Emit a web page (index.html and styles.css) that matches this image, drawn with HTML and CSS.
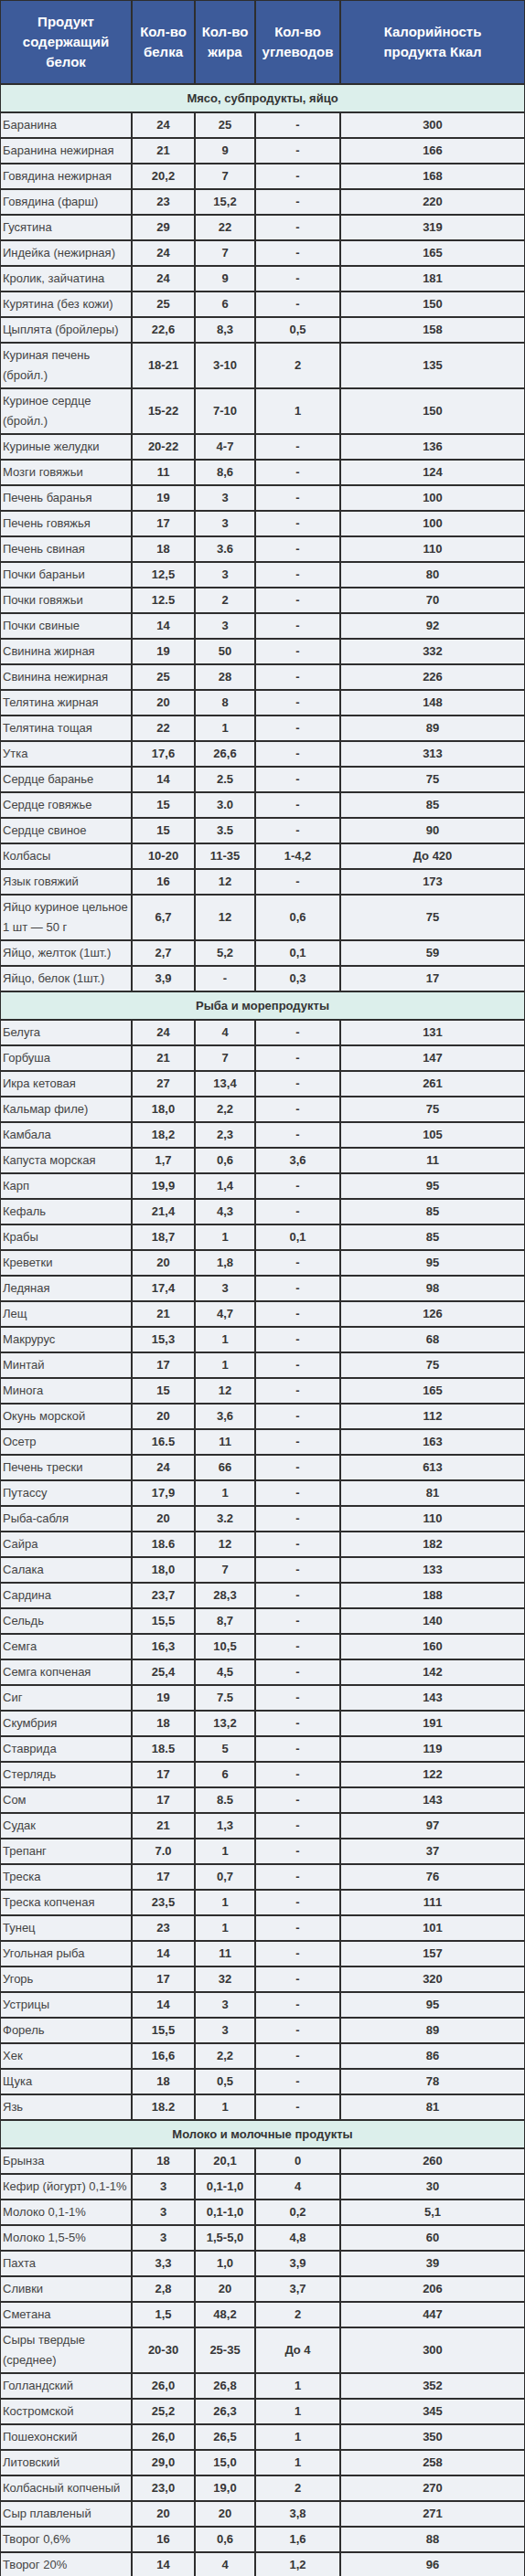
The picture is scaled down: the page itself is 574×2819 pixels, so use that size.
FILE: index.html
```html
<!DOCTYPE html>
<html lang="ru">
<head>
<meta charset="utf-8">
<title>Белок в продуктах</title>
<link rel="stylesheet" href="styles.css">
</head>
<body>
<table class="tbl">
<thead>
<tr class="hdr">
<th class="c1">Продукт<br>содержащий<br>белок</th>
<th class="c2">Кол-во<br>белка</th>
<th class="c3">Кол-во<br>жира</th>
<th class="c4">Кол-во<br>углеводов</th>
<th class="c5">Калорийность<br>продукта Ккал</th>
</tr>
</thead>
<tbody>
<tr class="sec"><td colspan="5">Мясо, субпродукты, яйцо</td></tr>
<tr><td class="name">Баранина</td><td>24</td><td>25</td><td>-</td><td>300</td></tr>
<tr><td class="name">Баранина нежирная</td><td>21</td><td>9</td><td>-</td><td>166</td></tr>
<tr><td class="name">Говядина нежирная</td><td>20,2</td><td>7</td><td>-</td><td>168</td></tr>
<tr><td class="name">Говядина (фарш)</td><td>23</td><td>15,2</td><td>-</td><td>220</td></tr>
<tr><td class="name">Гусятина</td><td>29</td><td>22</td><td>-</td><td>319</td></tr>
<tr><td class="name">Индейка (нежирная)</td><td>24</td><td>7</td><td>-</td><td>165</td></tr>
<tr><td class="name">Кролик, зайчатина</td><td>24</td><td>9</td><td>-</td><td>181</td></tr>
<tr><td class="name">Курятина (без кожи)</td><td>25</td><td>6</td><td>-</td><td>150</td></tr>
<tr><td class="name">Цыплята (бройлеры)</td><td>22,6</td><td>8,3</td><td>0,5</td><td>158</td></tr>
<tr><td class="name">Куриная печень<br>(бройл.)</td><td>18-21</td><td>3-10</td><td>2</td><td>135</td></tr>
<tr><td class="name">Куриное сердце<br>(бройл.)</td><td>15-22</td><td>7-10</td><td>1</td><td>150</td></tr>
<tr><td class="name">Куриные желудки</td><td>20-22</td><td>4-7</td><td>-</td><td>136</td></tr>
<tr><td class="name">Мозги говяжьи</td><td>11</td><td>8,6</td><td>-</td><td>124</td></tr>
<tr><td class="name">Печень баранья</td><td>19</td><td>3</td><td>-</td><td>100</td></tr>
<tr><td class="name">Печень говяжья</td><td>17</td><td>3</td><td>-</td><td>100</td></tr>
<tr><td class="name">Печень свиная</td><td>18</td><td>3.6</td><td>-</td><td>110</td></tr>
<tr><td class="name">Почки бараньи</td><td>12,5</td><td>3</td><td>-</td><td>80</td></tr>
<tr><td class="name">Почки говяжьи</td><td>12.5</td><td>2</td><td>-</td><td>70</td></tr>
<tr><td class="name">Почки свиные</td><td>14</td><td>3</td><td>-</td><td>92</td></tr>
<tr><td class="name">Свинина жирная</td><td>19</td><td>50</td><td>-</td><td>332</td></tr>
<tr><td class="name">Свинина нежирная</td><td>25</td><td>28</td><td>-</td><td>226</td></tr>
<tr><td class="name">Телятина жирная</td><td>20</td><td>8</td><td>-</td><td>148</td></tr>
<tr><td class="name">Телятина тощая</td><td>22</td><td>1</td><td>-</td><td>89</td></tr>
<tr><td class="name">Утка</td><td>17,6</td><td>26,6</td><td>-</td><td>313</td></tr>
<tr><td class="name">Сердце баранье</td><td>14</td><td>2.5</td><td>-</td><td>75</td></tr>
<tr><td class="name">Сердце говяжье</td><td>15</td><td>3.0</td><td>-</td><td>85</td></tr>
<tr><td class="name">Сердце свиное</td><td>15</td><td>3.5</td><td>-</td><td>90</td></tr>
<tr><td class="name">Колбасы</td><td>10-20</td><td>11-35</td><td>1-4,2</td><td>До 420</td></tr>
<tr><td class="name">Язык говяжий</td><td>16</td><td>12</td><td>-</td><td>173</td></tr>
<tr><td class="name">Яйцо куриное цельное<br>1 шт — 50 г</td><td>6,7</td><td>12</td><td>0,6</td><td>75</td></tr>
<tr><td class="name">Яйцо, желток (1шт.)</td><td>2,7</td><td>5,2</td><td>0,1</td><td>59</td></tr>
<tr><td class="name">Яйцо, белок (1шт.)</td><td>3,9</td><td>-</td><td>0,3</td><td>17</td></tr>
<tr class="sec"><td colspan="5">Рыба и морепродукты</td></tr>
<tr><td class="name">Белуга</td><td>24</td><td>4</td><td>-</td><td>131</td></tr>
<tr><td class="name">Горбуша</td><td>21</td><td>7</td><td>-</td><td>147</td></tr>
<tr><td class="name">Икра кетовая</td><td>27</td><td>13,4</td><td>-</td><td>261</td></tr>
<tr><td class="name">Кальмар филе)</td><td>18,0</td><td>2,2</td><td>-</td><td>75</td></tr>
<tr><td class="name">Камбала</td><td>18,2</td><td>2,3</td><td>-</td><td>105</td></tr>
<tr><td class="name">Капуста морская</td><td>1,7</td><td>0,6</td><td>3,6</td><td>11</td></tr>
<tr><td class="name">Карп</td><td>19,9</td><td>1,4</td><td>-</td><td>95</td></tr>
<tr><td class="name">Кефаль</td><td>21,4</td><td>4,3</td><td>-</td><td>85</td></tr>
<tr><td class="name">Крабы</td><td>18,7</td><td>1</td><td>0,1</td><td>85</td></tr>
<tr><td class="name">Креветки</td><td>20</td><td>1,8</td><td>-</td><td>95</td></tr>
<tr><td class="name">Ледяная</td><td>17,4</td><td>3</td><td>-</td><td>98</td></tr>
<tr><td class="name">Лещ</td><td>21</td><td>4,7</td><td>-</td><td>126</td></tr>
<tr><td class="name">Макрурус</td><td>15,3</td><td>1</td><td>-</td><td>68</td></tr>
<tr><td class="name">Минтай</td><td>17</td><td>1</td><td>-</td><td>75</td></tr>
<tr><td class="name">Минога</td><td>15</td><td>12</td><td>-</td><td>165</td></tr>
<tr><td class="name">Окунь морской</td><td>20</td><td>3,6</td><td>-</td><td>112</td></tr>
<tr><td class="name">Осетр</td><td>16.5</td><td>11</td><td>-</td><td>163</td></tr>
<tr><td class="name">Печень трески</td><td>24</td><td>66</td><td>-</td><td>613</td></tr>
<tr><td class="name">Путассу</td><td>17,9</td><td>1</td><td>-</td><td>81</td></tr>
<tr><td class="name">Рыба-сабля</td><td>20</td><td>3.2</td><td>-</td><td>110</td></tr>
<tr><td class="name">Сайра</td><td>18.6</td><td>12</td><td>-</td><td>182</td></tr>
<tr><td class="name">Салака</td><td>18,0</td><td>7</td><td>-</td><td>133</td></tr>
<tr><td class="name">Сардина</td><td>23,7</td><td>28,3</td><td>-</td><td>188</td></tr>
<tr><td class="name">Сельдь</td><td>15,5</td><td>8,7</td><td>-</td><td>140</td></tr>
<tr><td class="name">Семга</td><td>16,3</td><td>10,5</td><td>-</td><td>160</td></tr>
<tr><td class="name">Семга копченая</td><td>25,4</td><td>4,5</td><td>-</td><td>142</td></tr>
<tr><td class="name">Сиг</td><td>19</td><td>7.5</td><td>-</td><td>143</td></tr>
<tr><td class="name">Скумбрия</td><td>18</td><td>13,2</td><td>-</td><td>191</td></tr>
<tr><td class="name">Ставрида</td><td>18.5</td><td>5</td><td>-</td><td>119</td></tr>
<tr><td class="name">Стерлядь</td><td>17</td><td>6</td><td>-</td><td>122</td></tr>
<tr><td class="name">Сом</td><td>17</td><td>8.5</td><td>-</td><td>143</td></tr>
<tr><td class="name">Судак</td><td>21</td><td>1,3</td><td>-</td><td>97</td></tr>
<tr><td class="name">Трепанг</td><td>7.0</td><td>1</td><td>-</td><td>37</td></tr>
<tr><td class="name">Треска</td><td>17</td><td>0,7</td><td>-</td><td>76</td></tr>
<tr><td class="name">Треска копченая</td><td>23,5</td><td>1</td><td>-</td><td>111</td></tr>
<tr><td class="name">Тунец</td><td>23</td><td>1</td><td>-</td><td>101</td></tr>
<tr><td class="name">Угольная рыба</td><td>14</td><td>11</td><td>-</td><td>157</td></tr>
<tr><td class="name">Угорь</td><td>17</td><td>32</td><td>-</td><td>320</td></tr>
<tr><td class="name">Устрицы</td><td>14</td><td>3</td><td>-</td><td>95</td></tr>
<tr><td class="name">Форель</td><td>15,5</td><td>3</td><td>-</td><td>89</td></tr>
<tr><td class="name">Хек</td><td>16,6</td><td>2,2</td><td>-</td><td>86</td></tr>
<tr><td class="name">Щука</td><td>18</td><td>0,5</td><td>-</td><td>78</td></tr>
<tr><td class="name">Язь</td><td>18.2</td><td>1</td><td>-</td><td>81</td></tr>
<tr class="sec"><td colspan="5">Молоко и молочные продукты</td></tr>
<tr><td class="name">Брынза</td><td>18</td><td>20,1</td><td>0</td><td>260</td></tr>
<tr><td class="name">Кефир (йогурт) 0,1-1%</td><td>3</td><td>0,1-1,0</td><td>4</td><td>30</td></tr>
<tr><td class="name">Молоко 0,1-1%</td><td>3</td><td>0,1-1,0</td><td>0,2</td><td>5,1</td></tr>
<tr><td class="name">Молоко 1,5-5%</td><td>3</td><td>1,5-5,0</td><td>4,8</td><td>60</td></tr>
<tr><td class="name">Пахта</td><td>3,3</td><td>1,0</td><td>3,9</td><td>39</td></tr>
<tr><td class="name">Сливки</td><td>2,8</td><td>20</td><td>3,7</td><td>206</td></tr>
<tr><td class="name">Сметана</td><td>1,5</td><td>48,2</td><td>2</td><td>447</td></tr>
<tr><td class="name">Сыры твердые<br>(среднее)</td><td>20-30</td><td>25-35</td><td>До 4</td><td>300</td></tr>
<tr><td class="name">Голландский</td><td>26,0</td><td>26,8</td><td>1</td><td>352</td></tr>
<tr><td class="name">Костромской</td><td>25,2</td><td>26,3</td><td>1</td><td>345</td></tr>
<tr><td class="name">Пошехонский</td><td>26,0</td><td>26,5</td><td>1</td><td>350</td></tr>
<tr><td class="name">Литовский</td><td>29,0</td><td>15,0</td><td>1</td><td>258</td></tr>
<tr><td class="name">Колбасный копченый</td><td>23,0</td><td>19,0</td><td>2</td><td>270</td></tr>
<tr><td class="name">Сыр плавленый</td><td>20</td><td>20</td><td>3,8</td><td>271</td></tr>
<tr><td class="name">Творог 0,6%</td><td>16</td><td>0,6</td><td>1,6</td><td>88</td></tr>
<tr><td class="name">Творог 20%</td><td>14</td><td>4</td><td>1,2</td><td>96</td></tr>
</tbody>
</table>
</body>
</html>
```
FILE: styles.css
```css
html, body {
  margin: 0;
  padding: 0;
  background: #ffffff;
}

.tbl {
  width: 574px;
  table-layout: fixed;
  border-collapse: separate;
  border-spacing: 0;
  font-family: "Liberation Sans", Arial, sans-serif;
  font-size: 13px;
  color: #363636;
}

.tbl th,
.tbl td {
  box-sizing: border-box;
  border: 1px solid #2e2e2e;
  padding: 2px 2px;
  line-height: 22px;
  text-align: center;
  vertical-align: middle;
  font-weight: bold;
  background: #eef1f5;
}

.tbl .c1 { width: 144px; }
.tbl .c2 { width: 69px; }
.tbl .c3 { width: 66px; }
.tbl .c4 { width: 93px; }
.tbl .c5 { width: 202px; }

.hdr th {
  background: #3d5b9a;
  color: #ffffff;
  font-size: 15px;
  line-height: 22px;
  padding: 11px 2px 11px 2px;
  height: 92px;
}

.sec td {
  background: #dcefeb;
  color: #333333;
  font-size: 13px;
  padding: 3px 2px 2px 2px;
  height: 31px;
}

.tbl td.name {
  text-align: left;
  font-weight: normal;
  font-size: 13px;
  color: #444444;
  white-space: nowrap;
  padding-left: 2px;
}
```
